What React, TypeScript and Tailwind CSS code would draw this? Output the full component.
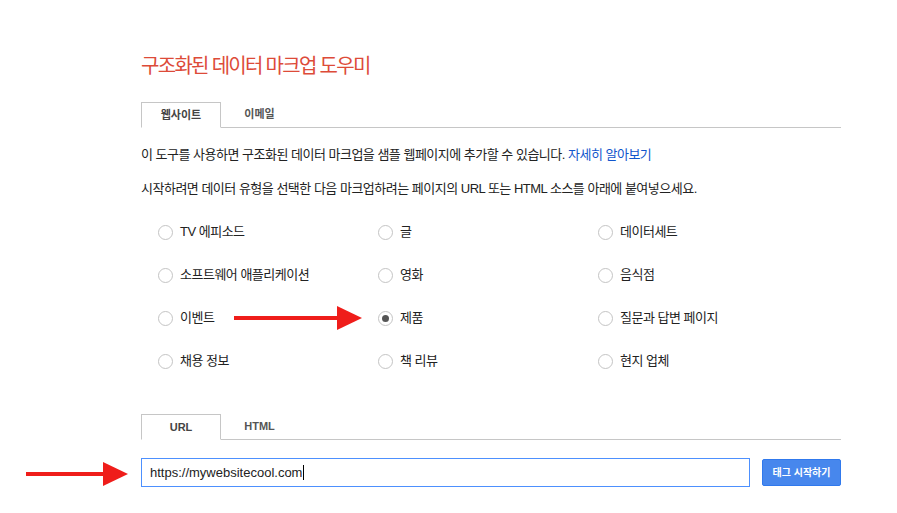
import React from "react";

const font = { fontFamily: '"Liberation Sans", Arial, "Noto Sans CJK KR", sans-serif' };

function Radio({ label, checked }: { label: string; checked?: boolean }) {
  return (
    <div className="flex items-center h-[20px]">
      <span className="w-[15px] h-[15px] rounded-full border border-[#c4c4c4] bg-white flex items-center justify-center shrink-0">
        {checked && <span className="w-[7px] h-[7px] rounded-full bg-[#555]" />}
      </span>
      <span className="ml-[7px] text-[13px] tracking-[-0.5px] text-[#222]">{label}</span>
    </div>
  );
}

function Tabs({ a, b }: { a: string; b: string }) {
  return (
    <div className="flex h-[26px] border-b border-[#c6c6c6]">
      <div className="w-[80px] h-[26px] border border-[#c6c6c6] border-b-white bg-white -mb-px flex items-center justify-center text-[11px] font-bold text-[#444]">
        {a}
      </div>
      <div className="w-[77px] flex items-center justify-center text-[11px] font-bold text-[#555]">{b}</div>
    </div>
  );
}

function Arrow({ w }: { w: number }) {
  return (
    <svg width={w} height="26" viewBox={`0 0 ${w} 26`}>
      <rect x="0" y="11" width={w - 22} height="4" fill="#ef1d1a" />
      <polygon points={`${w - 25},1 ${w},13 ${w - 25},25`} fill="#ef1d1a" />
    </svg>
  );
}

export default function App() {
  const items = [
    ["TV 에피소드", "글", "데이터세트"],
    ["소프트웨어 애플리케이션", "영화", "음식점"],
    ["이벤트", "제품", "질문과 답변 페이지"],
    ["채용 정보", "책 리뷰", "현지 업체"],
  ];
  return (
    <div className="w-[897px] h-[513px] bg-white relative overflow-hidden" style={font}>
      <div className="ml-[141px] w-[700px] pt-[52px]">
        <h1 className="text-[20px] leading-[28px] tracking-[-1.7px] text-[#dd4b39]">구조화된 데이터 마크업 도우미</h1>
        <div className="mt-[22px]">
          <Tabs a="웹사이트" b="이메일" />
        </div>
        <p className="mt-[18px] text-[13px] leading-[18px] tracking-[-0.5px] text-[#222]">
          이 도구를 사용하면 구조화된 데이터 마크업을 샘플 웹페이지에 추가할 수 있습니다.{" "}
          <span className="text-[#1155cc]">자세히 알아보기</span>
        </p>
        <p className="mt-[16px] text-[13px] leading-[18px] tracking-[-0.5px] text-[#222]">
          시작하려면 데이터 유형을 선택한 다음 마크업하려는 페이지의 URL 또는 HTML 소스를 아래에 붙여넣으세요.
        </p>
        <div className="mt-[24px] ml-[17px] grid grid-cols-[220px_220px_220px] gap-y-[23px]">
          {items.flat().map((l) => (
            <Radio key={l} label={l} checked={l === "제품"} />
          ))}
        </div>
        <div className="mt-[43px]">
          <Tabs a="URL" b="HTML" />
        </div>
        <div className="mt-[18px] flex items-center">
          <div className="w-[609px] h-[29px] border border-[#4d90fe] flex items-center pl-[8px] text-[13px] text-[#222]">
            https://mywebsitecool.com
            <span className="w-px h-[15px] bg-black ml-px" />
          </div>
          <button className="ml-[12px] w-[79px] h-[27px] rounded-[2px] bg-[#4787ed] border border-[#3079ed] text-white text-[10px] font-bold">
            태그 시작하기
          </button>
        </div>
      </div>
      <div className="absolute left-[234px] top-[305px]">
        <Arrow w={128} />
      </div>
      <div className="absolute left-[26px] top-[461px]">
        <Arrow w={102} />
      </div>
    </div>
  );
}
